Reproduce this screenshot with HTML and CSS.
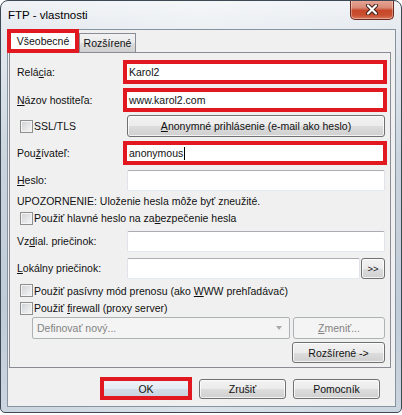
FILE: index.html
```html
<!DOCTYPE html>
<html lang="sk">
<head>
<meta charset="utf-8">
<title>FTP - vlastnosti</title>
<link rel="stylesheet" href="styles.css">
</head>
<body>
<div class="window">
  <div class="titlebar">
    <span class="title">FTP - vlastnosti</span>
    <div class="close">
      <svg width="14" height="11" viewBox="0 0 14 11">
        <path d="M3 1.5 L11 9.5 M11 1.5 L3 9.5" stroke="#3a1c16" stroke-width="4" stroke-linecap="round"/>
        <path d="M3 1.5 L11 9.5 M11 1.5 L3 9.5" stroke="#ffffff" stroke-width="2.2" stroke-linecap="round"/>
      </svg>
    </div>
  </div>
  <div class="client">
    <div class="tabs">
      <div class="tab tab-active">Všeobecné</div>
      <div class="tab">Rozšírené</div>
    </div>
    <div class="panel">
      <div class="row h28">
        <span class="lbl">Relá<u>c</u>ia:</span>
        <div class="field red">Karol2</div>
      </div>
      <div class="row h27">
        <span class="lbl"><u>N</u>ázov hostiteľa:</span>
        <div class="field red">www.karol2.com</div>
      </div>
      <div class="row h26">
        <span class="lbl check"><span class="cb"></span><span>SSL/TLS</span></span>
        <div class="btn wide"><span><u>A</u>nonymné prihlásenie (e-mail ako heslo)</span></div>
      </div>
      <div class="row h28">
        <span class="lbl">Pou<u>ž</u>ívateľ:</span>
        <div class="field red"><span>anonymous</span><span class="caret"></span></div>
      </div>
      <div class="row h26">
        <span class="lbl"><u>H</u>eslo:</span>
        <div class="field"></div>
      </div>
      <div class="row h15">
        <span class="text">UPOZORNENIE: Uloženie hesla môže byť zneužité.</span>
      </div>
      <div class="row h20">
        <span class="check"><span class="cb"></span><span>Použiť hlavné heslo na za<u>b</u>ezpečenie hesla</span></span>
      </div>
      <div class="row h26">
        <span class="lbl">Vz<u>d</u>ial. priečinok:</span>
        <div class="field"></div>
      </div>
      <div class="row h28">
        <span class="lbl"><u>L</u>okálny priečinok:</span>
        <div class="field"></div>
        <div class="btn browse">&gt;&gt;</div>
      </div>
      <div class="row h17">
        <span class="check"><span class="cb"></span><span>Použiť pasívny mód prenosu (ako <u>W</u>WW prehľadávač)</span></span>
      </div>
      <div class="row h18">
        <span class="check"><span class="cb"></span><span>Použiť <u>f</u>irewall (proxy server)</span></span>
      </div>
      <div class="row h22 indent">
        <div class="combo disabled"><span>Definovať nový...</span><span class="arrow"></span></div>
        <div class="btn disabled change"><span><u>Z</u>meniť...</span></div>
      </div>
      <div class="row last">
        <div class="btn adv">Rozšírené -&gt;</div>
      </div>
    </div>
    <div class="buttons">
      <div class="btn ok">OK</div>
      <div class="btn std">Zrušiť</div>
      <div class="btn std">Pomocník</div>
    </div>
  </div>
</div>
</body>
</html>
```
FILE: styles.css
```css
* { box-sizing: border-box; }
html, body { margin: 0; padding: 0; background: #ffffff; }
body {
  font-family: "Liberation Sans", Arial, sans-serif;
  font-size: 10.5px;
  color: #111;
}
u { text-decoration: underline; text-underline-offset: 1px; }

.window {
  width: 402px;
  height: 413px;
  border: 1px solid #3d4854;
  border-radius: 8px 8px 5px 5px;
  padding: 0 5px 5px 6px;
  display: flex;
  flex-direction: column;
  background:
    linear-gradient(90deg, rgba(255,255,255,0) 0%, rgba(255,255,255,0.3) 50%, rgba(255,255,255,0) 100%),
    linear-gradient(180deg, #f0f3f6 0%, #e6ebf0 6%, #c9d3dd 40%, #c0ccd8 75%, #cbd5df 100%);
  overflow: hidden;
}

.titlebar {
  height: 28px;
  display: flex;
  align-items: flex-start;
  flex: none;
}
.title {
  font-size: 11.5px;
  line-height: 14px;
  padding-top: 7px;
  padding-left: 1px;
  color: #000;
}
.close {
  margin-left: auto;
  margin-right: 2px;
  margin-top: -1px;
  width: 44px;
  height: 20px;
  border: 1px solid #6b2a1e;
  border-top: none;
  border-radius: 0 0 5px 5px;
  background: linear-gradient(180deg, #e6a899 0%, #d98a76 40%, #c7472b 55%, #c9502f 80%, #d8785e 100%);
  box-shadow: inset 0 0 0 1px rgba(255,255,255,0.35);
  display: flex;
  align-items: center;
  justify-content: center;
}

.client {
  flex: none;
  height: 378px;
  background: #f0f0f0;
  border: 1px solid #8593a1;
  display: flex;
  flex-direction: column;
}

.tabs {
  height: 22px;
  display: flex;
  align-items: flex-start;
  flex: none;
}
.tab {
  height: 19px;
  margin-top: 3px;
  border: 1px solid #898c95;
  border-bottom: none;
  background: linear-gradient(180deg, #f2f2f2 0%, #ebebeb 50%, #dddddd 51%, #cfcfcf 100%);
  display: flex;
  align-items: center;
  justify-content: center;
  width: 57px;
}
.tab-active {
  position: relative;
  z-index: 1;
  margin-top: -1px;
  margin-left: -1px;
  width: 72px;
  height: 24px;
  border: 4px solid #e11820;
  background: #ffffff;
}

.panel {
  flex: none;
  height: 316px;
  margin-left: 1px;
  margin-right: 4px;
  border: 1px solid #898c95;
  background: #f0f0f0;
  padding: 5px 5px 4px 7px;
  display: flex;
  flex-direction: column;
}

.row { display: flex; align-items: center; flex: none; }
.h28 { height: 28px; }
.h27 { height: 27px; }
.h26 { height: 26px; }
.h22 { height: 22px; }
.h20 { height: 20px; }
.h18 { height: 18px; }
.h17 { height: 17px; }
.h15 { height: 15px; }
.row.last { margin-top: 3px; height: 21px; justify-content: flex-end; }
.indent { padding-left: 15px; }

.lbl { width: 110px; flex: none; white-space: nowrap; }
.text { white-space: nowrap; }
.check { display: flex; align-items: center; white-space: nowrap; }

.cb {
  width: 13px;
  height: 13px;
  margin-left: 3px;
  margin-right: 1px;
  border: 1px solid #8e8f8f;
  background: linear-gradient(135deg, #cdd0d4 0%, #e5e6e8 55%, #f7f7f7 100%);
  box-shadow: inset 0 0 0 1px #f4f4f4;
  flex: none;
}

.field {
  flex: 1;
  height: 21px;
  background: #ffffff;
  border: 1px solid #e2e3ea;
  border-top-color: #abadb3;
  border-bottom-color: #e3e9ef;
  border-radius: 2px;
  display: flex;
  align-items: center;
  padding-left: 2px;
  white-space: nowrap;
}
.field.red {
  height: 24px;
  margin-left: -4px;
  margin-right: -2px;
  border: 4px solid #e11820;
  border-radius: 0;
  padding-left: 2px;
}
.caret {
  display: inline-block;
  width: 1px;
  height: 13px;
  background: #000;
  margin-left: 1px;
}

.btn {
  border: 1px solid #707070;
  border-radius: 3px;
  background: linear-gradient(180deg, #f2f2f2 0%, #ebebeb 50%, #dddddd 51%, #cfcfcf 100%);
  box-shadow: inset 0 0 0 1px rgba(255,255,255,0.75);
  display: flex;
  align-items: center;
  justify-content: center;
  white-space: nowrap;
  flex: none;
}
.btn.wide { flex: 1; height: 22px; }
.btn.browse { width: 24px; height: 21px; margin-left: 1px; font-size: 9.5px; }
.btn.disabled, .combo.disabled {
  border-color: #adb2b5;
  background: #f4f4f4;
  box-shadow: none;
  color: #838383;
}
.btn.change { width: 92px; height: 22px; margin-left: 3px; }
.btn.adv { width: 93px; height: 21px; }

.combo {
  width: 258px;
  height: 22px;
  border: 1px solid #adb2b5;
  border-radius: 2px;
  display: flex;
  align-items: center;
  padding-left: 4px;
  padding-right: 7px;
  flex: none;
}
.combo .arrow {
  margin-left: auto;
  width: 0;
  height: 0;
  border-left: 3.5px solid transparent;
  border-right: 3.5px solid transparent;
  border-top: 4px solid #a9a9a9;
}

.buttons {
  flex: 1;
  display: flex;
  align-items: flex-start;
  justify-content: flex-end;
  padding-top: 9px;
  padding-right: 15px;
}
.btn.std { width: 87px; height: 20px; margin-top: 2px; margin-left: 7px; }
.btn.ok {
  width: 92px;
  height: 23px;
  border: 4px solid #e11820;
  border-radius: 0;
  box-shadow: none;
  background: linear-gradient(180deg, #eef3f8 0%, #e3ebf3 50%, #d3dde8 51%, #c9d4e0 100%);
}
```
